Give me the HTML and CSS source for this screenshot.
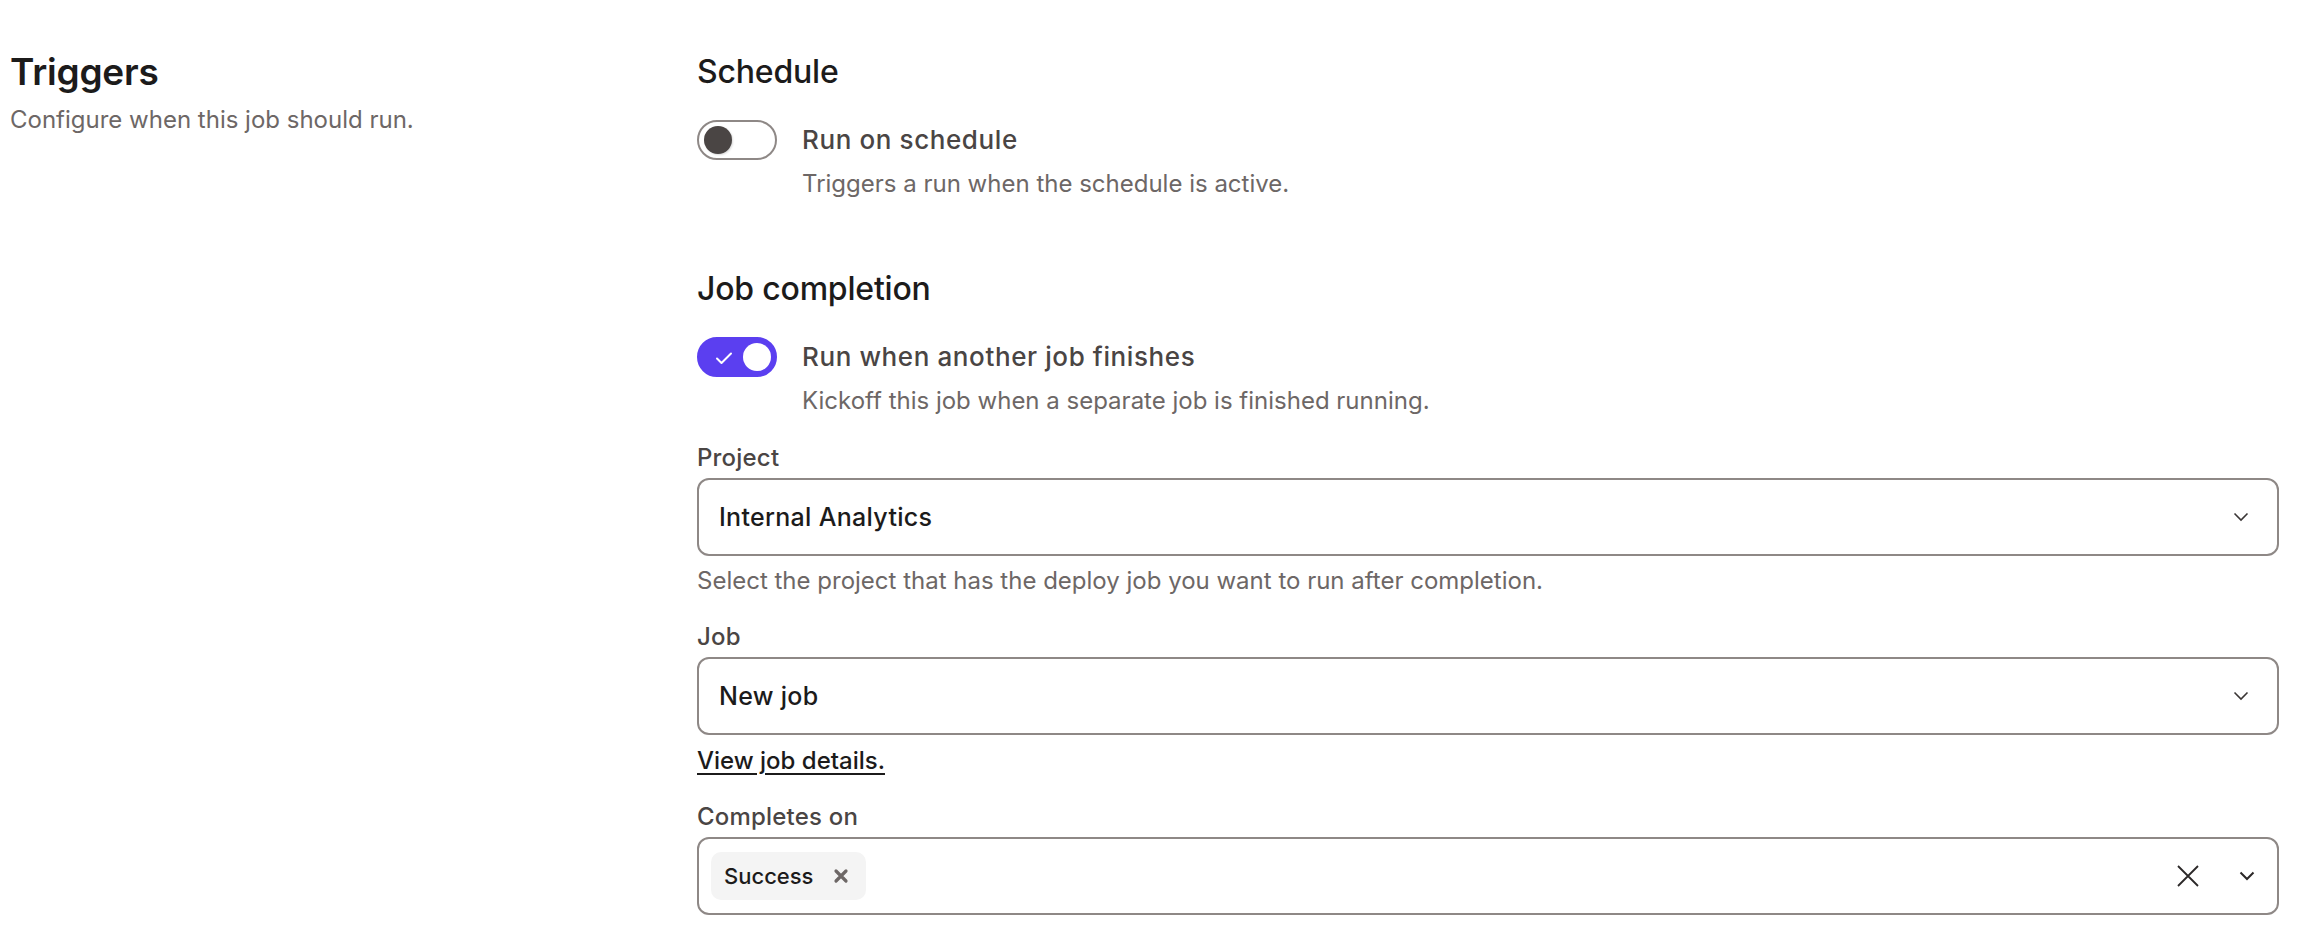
FILE: index.html
```html
<!DOCTYPE html>
<html lang="en">
<head>
    <meta charset="UTF-8">
    <meta name="viewport" content="width=device-width, initial-scale=1.0">
    <title>Triggers</title>
    <link rel="stylesheet" href="styles.css">
</head>
<body>
    <div class="page">
        <div class="intro">
            <h1>Triggers</h1>
            <p>Configure when this job should run.</p>
        </div>

        <div class="settings">
            <h2>Schedule</h2>
            <div class="toggle-row">
                <button class="toggle" type="button" aria-pressed="false">
                    <span class="knob"></span>
                </button>
                <div class="toggle-text">
                    <div class="toggle-label">Run on schedule</div>
                    <div class="toggle-desc">Triggers a run when the schedule is active.</div>
                </div>
            </div>

            <h2 class="section-gap">Job completion</h2>
            <div class="toggle-row">
                <button class="toggle on" type="button" aria-pressed="true">
                    <svg class="check" width="18" height="14" viewBox="0 0 18 14">
                        <polyline points="2,7.5 6.5,12 16,2.5" fill="none" stroke="#fff" stroke-width="2" stroke-linecap="round" stroke-linejoin="round"/>
                    </svg>
                    <span class="knob"></span>
                </button>
                <div class="toggle-text">
                    <div class="toggle-label">Run when another job finishes</div>
                    <div class="toggle-desc">Kickoff this job when a separate job is finished running.</div>
                </div>
            </div>

            <div class="field first">
                <label>Project</label>
                <div class="select">
                    <span class="value">Internal Analytics</span>
                    <svg class="chevron" width="16" height="10" viewBox="0 0 16 10">
                        <polyline points="1.5,1.5 8,8 14.5,1.5" fill="none" stroke="#3a3635" stroke-width="1.6"/>
                    </svg>
                </div>
                <div class="help">Select the project that has the deploy job you want to run after completion.</div>
            </div>

            <div class="field">
                <label>Job</label>
                <div class="select">
                    <span class="value">New job</span>
                    <svg class="chevron" width="16" height="10" viewBox="0 0 16 10">
                        <polyline points="1.5,1.5 8,8 14.5,1.5" fill="none" stroke="#3a3635" stroke-width="1.6"/>
                    </svg>
                </div>
                <a class="details-link" href="#">View job details.</a>
            </div>

            <div class="field">
                <label>Completes on</label>
                <div class="select multi">
                    <span class="chip">
                        Success
                        <svg class="chip-x" width="16" height="16" viewBox="0 0 16 16">
                            <path d="M3 3 L13 13 M13 3 L3 13" stroke="#6d6766" stroke-width="3.2" stroke-linecap="round"/>
                        </svg>
                    </span>
                    <span class="spacer"></span>
                    <svg class="clear" width="24" height="24" viewBox="0 0 24 24">
                        <path d="M2 2 L22 22 M22 2 L2 22" stroke="#2b2828" stroke-width="1.8"/>
                    </svg>
                    <svg class="chevron" width="16" height="10" viewBox="0 0 16 10">
                        <polyline points="1.5,1.5 8,8 14.5,1.5" fill="none" stroke="#2b2828" stroke-width="2"/>
                    </svg>
                </div>
            </div>
        </div>
    </div>
</body>
</html>
```

FILE: styles.css
```css
body {
    margin: 0;
    padding: 0;
    background: #ffffff;
    font-family: Inter, "Noto Sans", sans-serif;
    color: #1c1b1b;
}

.page {
    display: grid;
    grid-template-columns: 687px 1fr;
    padding: 50px 31px 0 10px;
}

h1 {
    margin: 0;
    font-size: 37px;
    line-height: 44px;
    font-weight: 600;
    letter-spacing: -0.2px;
    color: #1c1b1b;
}

.intro p {
    margin: 11px 0 0;
    font-size: 24px;
    line-height: 30px;
    color: #6d6766;
}

h2 {
    margin: 0;
    font-size: 32px;
    line-height: 44px;
    font-weight: 500;
    letter-spacing: -0.2px;
    color: #1c1b1b;
}

.section-gap {
    margin-top: 68px;
}

.toggle-row {
    display: flex;
    align-items: flex-start;
    gap: 25px;
    margin-top: 26px;
}

.toggle {
    position: relative;
    flex: none;
    width: 80px;
    height: 40px;
    padding: 0;
    border: 2px solid #8e8886;
    border-radius: 20px;
    background: #ffffff;
    cursor: pointer;
}

.toggle .knob {
    position: absolute;
    top: 4px;
    left: 5px;
    width: 28px;
    height: 28px;
    border-radius: 50%;
    background: #4a4544;
    box-shadow: 1px 1px 2px rgba(0, 0, 0, 0.15);
}

.toggle.on {
    border-color: #5b3ff0;
    background: #5b3ff0;
}

.toggle.on .knob {
    left: auto;
    right: 4px;
    background: #ffffff;
    box-shadow: none;
}

.toggle .check {
    position: absolute;
    left: 16px;
    top: 12px;
}

.toggle-label {
    font-size: 26px;
    line-height: 40px;
    font-weight: 500;
    letter-spacing: 0.6px;
    color: #4a4544;
}

.toggle-desc {
    margin-top: 9px;
    font-size: 24px;
    line-height: 30px;
    color: #6d6766;
}

.field {
    margin-top: 26px;
}

.field.first {
    margin-top: 27px;
}

.field label {
    display: block;
    font-size: 24px;
    line-height: 30px;
    font-weight: 500;
    letter-spacing: 0.2px;
    color: #4a4544;
}

.select {
    display: flex;
    align-items: center;
    height: 78px;
    box-sizing: border-box;
    margin-top: 5px;
    padding: 0 28px 0 20px;
    border: 2px solid #8e8886;
    border-radius: 12px;
    background: #ffffff;
}

.select .value {
    flex: 1;
    font-size: 25px;
    font-weight: 500;
    letter-spacing: 0.3px;
    color: #1c1b1b;
}

.select.multi {
    padding: 0 22px 0 12px;
}

.chip {
    display: flex;
    align-items: center;
    gap: 20px;
    height: 48px;
    padding: 0 17px 0 13px;
    border-radius: 10px;
    background: #f4f4f4;
    font-size: 22px;
    font-weight: 500;
    color: #1c1b1b;
}

.spacer {
    flex: 1;
}

.clear {
    margin-right: 39px;
}

.help {
    margin-top: 10px;
    font-size: 24px;
    line-height: 30px;
    color: #6d6766;
}

.details-link {
    display: inline-block;
    margin-top: 11px;
    font-size: 24px;
    line-height: 30px;
    font-weight: 500;
    color: #1c1b1b;
    text-decoration: underline;
    text-underline-offset: 4px;
}
```
